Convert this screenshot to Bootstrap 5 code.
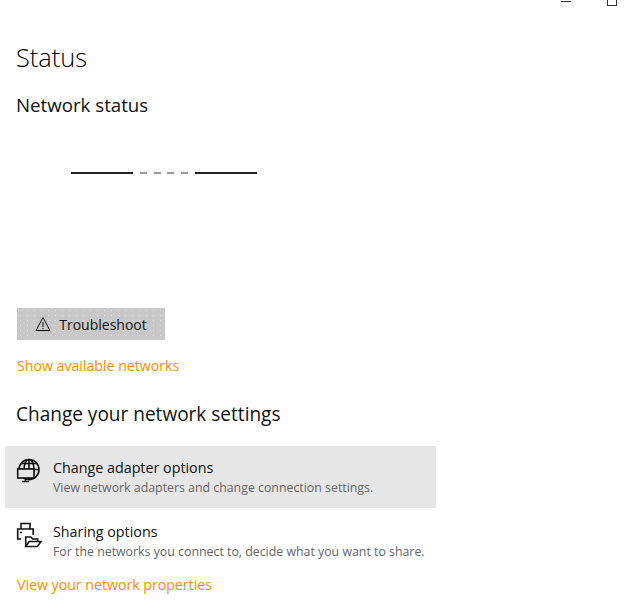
<!doctype html>
<html lang="en"><head><meta charset="utf-8">
<link href="https://cdn.jsdelivr.net/npm/bootstrap@5.3.0/dist/css/bootstrap.min.css" rel="stylesheet">
<style>
html,body{height:609px;overflow:hidden;background:#fff}
body{font-family:"Open Sans","Noto Sans",sans-serif;color:#111}
.chrome{height:6px;padding-right:25px;gap:36px}
.chrome-min{width:10px;height:1px;background:#333;margin-top:1px}
.chrome-max{width:10px;height:6px;border:1px solid #333;border-top:0}
.page-title{font-size:25.4px;font-weight:300;line-height:34px;margin:34px 0 0 16px;color:#000}
.sec-title{font-size:18.7px;font-weight:400;line-height:24px;margin:0 0 0 16px}
.net-status{margin-top:19px}
.net-diagram{margin:55px 0 0 71px;height:2px;gap:7px}
.net-solid{width:62px;height:2px;background:#222}
.net-dashes{width:48px}
.net-dash{width:7px;height:2px;background:#999}
.ts-btn{margin:134px 0 0 17px;width:148px;height:32px;background-color:#c8c8c8;background-image:radial-gradient(#e4e2d8 .5px,transparent .7px);background-size:7px 5px;font-size:14px;border-radius:0;gap:8px;color:#111;padding:0;border:0}
.orange-link{color:#ff8c00;font-size:14.15px;text-decoration:none;line-height:20px;display:block;margin-left:17px}
.show-nets{margin-top:16px}
.sec-title.change-title{margin-top:26px;font-size:19.05px}
.opt-list{margin:20px 0 0 5px;width:431px}
.opt-row{height:62px;gap:11px;padding:12px 12px 0 11px}
.opt-row.active-row{background:#e6e6e6}
.opt-row svg{flex:none}
.opt-name{font-size:14.3px;line-height:20px;color:#111}
.opt-desc{font-size:12.35px;line-height:20px;color:#666;white-space:nowrap}
.opt-row.plain{height:67px;padding-top:14px}
</style></head><body>
<div class="chrome d-flex justify-content-end align-items-start"><span class="chrome-min"></span><span class="chrome-max"></span></div>
<h1 class="page-title">Status</h1>
<h2 class="sec-title net-status">Network status</h2>
<div class="net-diagram d-flex align-items-center"><span class="net-solid"></span><span class="net-dashes d-flex justify-content-between"><span class="net-dash"></span><span class="net-dash"></span><span class="net-dash"></span><span class="net-dash"></span></span><span class="net-solid"></span></div>
<button class="ts-btn btn d-flex align-items-center justify-content-center">
<svg width="16" height="16" viewBox="0 0 16 16" fill="none" stroke="#111"><path d="M8 1.5 1 14.5h14zM8 6v5M8 12v1.2"/></svg>Troubleshoot</button>
<a class="orange-link show-nets" href="#">Show available networks</a>
<h2 class="sec-title change-title">Change your network settings</h2>
<div class="opt-list">
<div class="opt-row active-row d-flex">
<svg width="26" height="26" viewBox="0 0 26 26" fill="none" stroke="#111" stroke-width="1.6"><circle cx="13" cy="11.5" r="10"/><ellipse cx="13" cy="11.5" rx="5" ry="10"/><path d="M5 5.5h16M3 11.5h20M13 1.5v20"/><rect x="1.7" y="11" width="16.3" height="9" fill="#e6e6e6"/><path d="M9.5 20v3.5M6 23.5h7"/></svg>
<div><div class="opt-name">Change adapter options</div><div class="opt-desc">View network adapters and change connection settings.</div></div></div>
<div class="opt-row plain d-flex">
<svg width="26" height="26" viewBox="0 0 26 26" fill="none" stroke="#111" stroke-width="1.6"><path d="M5 7V1.5h9V7M5 17H1.7V7h15.5v6M4 10.5h2"/><path d="M9.7 24.5V15h5l2 2h5v2.5" fill="#fff"/><path d="M9.7 24.5l3.5-5H25l-3.5 5z" fill="#fff"/></svg>
<div><div class="opt-name">Sharing options</div><div class="opt-desc">For the networks you connect to, decide what you want to share.</div></div></div>
</div>
<a class="orange-link" href="#">View your network properties</a>
</body></html>
